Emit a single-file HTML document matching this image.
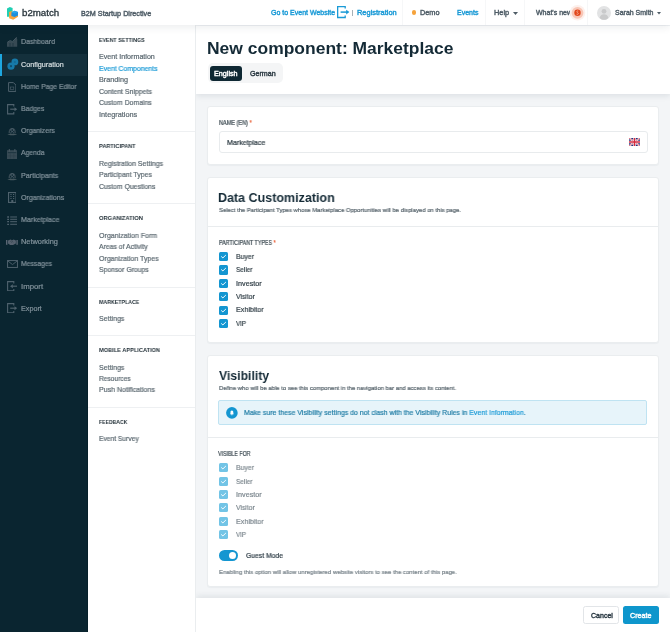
<!DOCTYPE html>
<html><head><meta charset="utf-8"><style>
html,body{margin:0;padding:0;width:670px;height:632px;overflow:hidden;background:#f3f5f7;font-family:"Liberation Sans", sans-serif}
.t{position:absolute;white-space:nowrap;will-change:transform}
.n{-webkit-text-stroke:0.2px currentColor}
.sb{-webkit-text-stroke:0.4px currentColor}
.r{position:absolute}
</style></head><body>
<div class="r" style="left:196px;top:26px;width:474px;height:606px;background:#f3f5f7"></div>
<div class="r" style="left:196px;top:26px;width:474px;height:68px;background:#fff;box-shadow:0 2px 6px rgba(20,40,60,0.10)"></div>
<div class="r" style="left:0px;top:0px;width:670px;height:25px;background:#fff;box-shadow:0 2px 9px rgba(20,40,60,0.09);z-index:8"></div>
<div class="r" style="left:0px;top:25px;width:88px;height:607px;background:#0a2530;z-index:5"></div>
<div class="r" style="left:87px;top:25px;width:1px;height:607px;background:#06202a;z-index:6"></div>
<div class="r" style="left:88px;top:25px;width:107px;height:607px;background:#fff;border-right:1px solid #eaedef;z-index:5"></div>
<svg class="r" style="left:0px;top:0px;z-index:9" width="22" height="22" viewBox="0 0 22 22"><polygon points="7,8.4 9.8,6.9 12.6,7.9 12.6,16.8 7,16.8" fill="#1fcfb3"/><polygon points="9.1,12 11.9,11 11.9,15.2 18,13.6 18,16.8 13.2,19.7 9.1,18.2" fill="#f9a43b"/><polygon points="11.4,12.4 14.6,10.8 18,12.1 18,15.4 14.6,17.1 11.4,15.9" fill="#1d8fdc"/><polygon points="11.4,12.4 14.6,10.8 18,12.1 14.6,13.6" fill="#2aa6ea"/></svg>
<div class="t n" style="left:21.71px;top:9px;font-size:8.4px;line-height:8.4px;color:#2a363d;font-weight:400;letter-spacing:0px;transform:scaleX(1.1585);transform-origin:0 0;z-index:9;-webkit-text-stroke:0.3px #2a363d">b2match</div>
<div class="t sb" style="left:81.46px;top:10px;font-size:7.0px;line-height:7.0px;color:#4e5c66;font-weight:401;letter-spacing:0px;transform:scaleX(1.0312);transform-origin:0 0;z-index:9">B2M Startup Directive</div>
<div class="t sb" style="left:270.56px;top:9px;font-size:7.0px;line-height:7.0px;color:#1a9ad6;font-weight:401;letter-spacing:0px;transform:scaleX(0.9981);transform-origin:0 0;z-index:9">Go to Event Website</div>
<svg class="r" style="left:337.3px;top:6.2px;z-index:9" width="14" height="13" viewBox="0 0 14 13"><path d="M8.2,2.6 V0.65 H0.65 V11.5 H8.2 V9.4" fill="none" stroke="#1a9ad6" stroke-width="1.3"/><path d="M3.6,6.1 H10" stroke="#1a9ad6" stroke-width="1.5"/><path d="M9.2,3.7 L12.4,6.1 L9.2,8.5 Z" fill="#1a9ad6"/></svg>
<div class="r" style="left:352.2px;top:10.2px;width:1.3px;height:5.6px;background:#a7b0b6;z-index:9"></div>
<div class="t sb" style="left:356.55px;top:9px;font-size:7.0px;line-height:7.0px;color:#1a9ad6;font-weight:401;letter-spacing:0px;transform:scaleX(1.0632);transform-origin:0 0;z-index:9">Registration</div>
<div class="r" style="left:402px;top:0px;width:1px;height:25px;background:#f6f7f8;z-index:9"></div>
<div class="r" style="left:485px;top:0px;width:1px;height:25px;background:#f6f7f8;z-index:9"></div>
<div class="r" style="left:524px;top:0px;width:1px;height:25px;background:#f6f7f8;z-index:9"></div>
<div class="r" style="left:587px;top:0px;width:1px;height:25px;background:#f6f7f8;z-index:9"></div>
<div class="r" style="left:411.8px;top:10.2px;width:4.6px;height:4.6px;background:#f6a33b;border-radius:50%;z-index:9"></div>
<div class="t sb" style="left:420.25px;top:9px;font-size:7.0px;line-height:7.0px;color:#4e5c66;font-weight:401;letter-spacing:0px;transform:scaleX(1.0461);transform-origin:0 0;z-index:9">Demo</div>
<div class="t sb" style="left:457.36px;top:9px;font-size:7.0px;line-height:7.0px;color:#1a9ad6;font-weight:401;letter-spacing:0px;transform:scaleX(0.9961);transform-origin:0 0;z-index:9">Events</div>
<div class="t sb" style="left:494.35px;top:9px;font-size:7.0px;line-height:7.0px;color:#4e5c66;font-weight:401;letter-spacing:0px;transform:scaleX(1.0530);transform-origin:0 0;z-index:9">Help</div>
<svg class="r" style="left:513px;top:11.5px;z-index:9" width="5" height="3" viewBox="0 0 5 3"><path d="M0,0 H5 L2.5,3 Z" fill="#4e5c66"/></svg>
<div class="t sb" style="left:535.76px;top:9px;font-size:7.0px;line-height:7.0px;color:#4e5c66;font-weight:401;letter-spacing:0px;transform:scaleX(1.0006);transform-origin:0 0;z-index:9">What's new</div>
<svg class="r" style="left:569px;top:4px;z-index:9" width="17" height="17" viewBox="0 0 17 17"><circle cx="8.5" cy="8.8" r="7.8" fill="#fdf0ec"/><circle cx="8.5" cy="8.8" r="5.9" fill="#f8c6b6"/><circle cx="8.5" cy="8.8" r="3.2" fill="#e2461b"/><path d="M9.3,7.1 C8.9,6.8 7.6,6.9 7.8,7.9 C7.9,8.6 9.3,8.6 9.3,9.6 C9.3,10.5 8,10.6 7.6,10.2" fill="none" stroke="#f7c0ae" stroke-width="0.7"/></svg>
<svg class="r" style="left:597px;top:5.5px;z-index:9" width="14" height="14" viewBox="0 0 14 14">
<circle cx="7" cy="7" r="7" fill="#e2e3e4"/>
<circle cx="7" cy="5.3" r="2.4" fill="#c9cacb"/>
<path d="M2.6,12 C3.2,9 4.8,8.2 7,8.2 C9.2,8.2 10.8,9 11.4,12 C10,13.3 8.6,13.8 7,13.8 C5.4,13.8 4,13.3 2.6,12Z" fill="#c9cacb"/>
</svg>
<div class="t sb" style="left:615.06px;top:9px;font-size:7.0px;line-height:7.0px;color:#4e5c66;font-weight:401;letter-spacing:0px;transform:scaleX(0.9974);transform-origin:0 0;z-index:9">Sarah Smith</div>
<svg class="r" style="left:657px;top:11.5px;z-index:9" width="4" height="3" viewBox="0 0 4 3"><path d="M0,0 H4 L2,2.6 Z" fill="#4e5c66"/></svg>
<div class="r" style="left:0px;top:53.5px;width:88px;height:22.5px;background:#14303c;z-index:5"></div>
<div class="r" style="left:0px;top:53.5px;width:1.7px;height:22.5px;background:#1ea7e0;z-index:6"></div>
<div class="t n" style="left:20.66px;top:38px;font-size:7.2px;line-height:7.2px;color:#83939c;font-weight:400;letter-spacing:0px;transform:scaleX(0.9669);transform-origin:0 0;z-index:9">Dashboard</div>
<div class="t n" style="left:20.66px;top:61px;font-size:7.2px;line-height:7.2px;color:#d8dfe2;font-weight:400;letter-spacing:0px;transform:scaleX(0.9989);transform-origin:0 0;z-index:9">Configuration</div>
<div class="t n" style="left:20.66px;top:83px;font-size:7.2px;line-height:7.2px;color:#83939c;font-weight:400;letter-spacing:0px;transform:scaleX(0.9488);transform-origin:0 0;z-index:9">Home Page Editor</div>
<div class="t n" style="left:20.66px;top:105px;font-size:7.2px;line-height:7.2px;color:#83939c;font-weight:400;letter-spacing:0px;transform:scaleX(0.9612);transform-origin:0 0;z-index:9">Badges</div>
<div class="t n" style="left:20.66px;top:127px;font-size:7.2px;line-height:7.2px;color:#83939c;font-weight:400;letter-spacing:0px;transform:scaleX(0.9624);transform-origin:0 0;z-index:9">Organizers</div>
<div class="t n" style="left:20.66px;top:149px;font-size:7.2px;line-height:7.2px;color:#83939c;font-weight:400;letter-spacing:0px;transform:scaleX(0.9488);transform-origin:0 0;z-index:9">Agenda</div>
<div class="t n" style="left:20.66px;top:172px;font-size:7.2px;line-height:7.2px;color:#83939c;font-weight:400;letter-spacing:0px;transform:scaleX(0.9886);transform-origin:0 0;z-index:9">Participants</div>
<div class="t n" style="left:20.66px;top:194px;font-size:7.2px;line-height:7.2px;color:#83939c;font-weight:400;letter-spacing:0px;transform:scaleX(0.9745);transform-origin:0 0;z-index:9">Organizations</div>
<div class="t n" style="left:20.66px;top:216px;font-size:7.2px;line-height:7.2px;color:#83939c;font-weight:400;letter-spacing:0px;transform:scaleX(0.9816);transform-origin:0 0;z-index:9">Marketplace</div>
<div class="t n" style="left:20.65px;top:238px;font-size:7.2px;line-height:7.2px;color:#83939c;font-weight:400;letter-spacing:0px;transform:scaleX(1.0259);transform-origin:0 0;z-index:9">Networking</div>
<div class="t n" style="left:20.66px;top:260px;font-size:7.2px;line-height:7.2px;color:#83939c;font-weight:400;letter-spacing:0px;transform:scaleX(0.9447);transform-origin:0 0;z-index:9">Messages</div>
<div class="t n" style="left:20.64px;top:283px;font-size:7.2px;line-height:7.2px;color:#83939c;font-weight:400;letter-spacing:0px;transform:scaleX(1.0825);transform-origin:0 0;z-index:9">Import</div>
<div class="t n" style="left:20.66px;top:305px;font-size:7.2px;line-height:7.2px;color:#83939c;font-weight:400;letter-spacing:0px;transform:scaleX(0.9970);transform-origin:0 0;z-index:9">Export</div>
<svg class="r" style="left:7px;top:37.3px;z-index:6" width="10.5" height="10.5" viewBox="0 0 10.5 10.5"><path d="M0,5.5 L3,4 L5.5,5 L9.5,0.5 L10.2,2 V9.8 H0 Z" fill="#374a54"/><path d="M0.3,5.3 L3,3.6 L5.5,4.6 L9.6,0.3" fill="none" stroke="#4a5c66" stroke-width="0.9"/><path d="M3,6 V9.5 M6,6 V9.5" stroke="#0a2530" stroke-width="0.5"/></svg>
<svg class="r" style="left:6.5px;top:58.2px;z-index:6" width="12" height="12.5" viewBox="0 0 12 12.5"><circle cx="4" cy="8.2" r="3.6" fill="#1779a8"/><circle cx="7.9" cy="3.9" r="3.4" fill="#1779a8"/><circle cx="4" cy="8.2" r="1.1" fill="#0f4c6c"/><circle cx="7.9" cy="3.9" r="1" fill="#136a95"/></svg>
<svg class="r" style="left:7.8px;top:82.3px;z-index:6" width="8.5" height="10" viewBox="0 0 8.5 10"><path d="M0.6,0.6 H5.4 L7.9,3.1 V9.4 H0.6 Z" fill="none" stroke="#4f626d" stroke-width="1"/><rect x="2.5" y="5" width="3.3" height="2.5" fill="none" stroke="#4f626d" stroke-width="0.6"/></svg>
<svg class="r" style="left:7px;top:104px;z-index:6" width="10.5" height="10.5" viewBox="0 0 10.5 10.5"><path d="M6.8,2.4 V0.6 H0.6 V9.9 H6.8 V8.1" fill="none" stroke="#4f626d" stroke-width="1.1"/><path d="M3.2,5.2 H8.3" stroke="#4f626d" stroke-width="1.2"/><path d="M7.5,3.2 L10.2,5.2 L7.5,7.2 Z" fill="#4f626d"/></svg>
<svg class="r" style="left:7px;top:127.2px;z-index:6" width="10.5" height="8.5" viewBox="0 0 10.5 8.5"><path d="M2.2,6.2 C2.2,3 3.3,1.6 5.2,1.6 C7.1,1.6 8.2,3 8.2,6.2" fill="none" stroke="#374a54" stroke-width="1.4"/><circle cx="5.2" cy="3" r="1.4" fill="none" stroke="#4f626d" stroke-width="0.8"/><path d="M3.6,6.5 C3.8,5.3 4.4,4.7 5.2,4.7 C6,4.7 6.6,5.3 6.8,6.5" fill="none" stroke="#4f626d" stroke-width="0.8"/><path d="M0.3,7.6 C2,6.5 8.4,6.5 10.2,7.6 C8.4,8.6 2,8.6 0.3,7.6 Z" fill="#46585f"/></svg>
<svg class="r" style="left:7px;top:148.7px;z-index:6" width="10.2" height="10.2" viewBox="0 0 10.2 10.2"><rect x="0" y="1.2" width="10.2" height="9" fill="#374a54"/><path d="M2.3,0 V2.6 M7.9,0 V2.6" stroke="#4a5c66" stroke-width="1"/><path d="M0.8,3.6 H9.4" stroke="#0d2833" stroke-width="0.6"/><path d="M3.4,4.2 V9.6 M6.8,4.2 V9.6 M0.8,6.9 H9.4" stroke="#2c3e48" stroke-width="0.5"/></svg>
<svg class="r" style="left:7px;top:172px;z-index:6" width="10.5" height="8.5" viewBox="0 0 10.5 8.5"><path d="M2.2,6.2 C2.2,3 3.3,1.6 5.2,1.6 C7.1,1.6 8.2,3 8.2,6.2" fill="none" stroke="#374a54" stroke-width="1.4"/><circle cx="5.2" cy="3" r="1.4" fill="none" stroke="#4f626d" stroke-width="0.8"/><path d="M3.6,6.5 C3.8,5.3 4.4,4.7 5.2,4.7 C6,4.7 6.6,5.3 6.8,6.5" fill="none" stroke="#4f626d" stroke-width="0.8"/><path d="M0.3,7.6 C2,6.5 8.4,6.5 10.2,7.6 C8.4,8.6 2,8.6 0.3,7.6 Z" fill="#46585f"/></svg>
<svg class="r" style="left:7.6px;top:192.4px;z-index:6" width="8.6" height="11" viewBox="0 0 8.6 11"><rect x="0.55" y="0.55" width="7.5" height="9.9" fill="none" stroke="#4f626d" stroke-width="1.1"/><path d="M2.4,2.5 H3.6 M5,2.5 H6.2 M2.4,4.5 H3.6 M5,4.5 H6.2 M2.4,6.5 H3.6 M5,6.5 H6.2" stroke="#4f626d" stroke-width="1"/><rect x="3.3" y="8" width="2" height="2.5" fill="#4f626d"/></svg>
<svg class="r" style="left:6.8px;top:216px;z-index:6" width="10.4" height="9.4" viewBox="0 0 10.4 9.4"><path d="M0.2,1 H2 M0.2,3.3 H2 M0.2,5.7 H2 M0.2,8.3 H2" stroke="#4f626d" stroke-width="1.3"/><path d="M3.2,1 H10.2 M3.2,3.3 H10.2 M3.2,5.7 H10.2 M3.2,8.3 H10.2" stroke="#4f626d" stroke-width="1"/></svg>
<svg class="r" style="left:6.2px;top:238.8px;z-index:6" width="12" height="6.6" viewBox="0 0 12 6.6"><rect x="0" y="1" width="1.4" height="4.8" fill="#5a6673"/><rect x="10.4" y="1" width="1.4" height="4.8" fill="#5a6673"/><path d="M2,1.6 L4.5,0.4 L6.2,1.2 L7.6,0.4 L9.9,1.4 V4.6 L6.4,6.3 L4.2,5.9 L2,4.6 Z" fill="#55616e"/><path d="M4.3,2.2 L5.9,3.6 M5.4,1.6 L7.3,3.4" stroke="#33424d" stroke-width="0.7"/></svg>
<svg class="r" style="left:6.6px;top:259.5px;z-index:6" width="11" height="8" viewBox="0 0 11 8"><rect x="0.55" y="0.55" width="9.9" height="6.9" fill="none" stroke="#4f626d" stroke-width="1"/><path d="M0.7,0.8 L5.5,4.6 L10.3,0.8" fill="none" stroke="#4f626d" stroke-width="0.9"/></svg>
<svg class="r" style="left:6.8px;top:280.6px;z-index:6" width="10.5" height="10.5" viewBox="0 0 10.5 10.5"><path d="M6.8,2.4 V0.6 H0.6 V9.9 H6.8 V8.1" fill="none" stroke="#4f626d" stroke-width="1.1"/><path d="M5.2,5.2 H10.2" stroke="#4f626d" stroke-width="1.2"/><path d="M5.8,3.2 L3,5.2 L5.8,7.2 Z" fill="#4f626d"/></svg>
<svg class="r" style="left:6.8px;top:302.6px;z-index:6" width="10.5" height="10.5" viewBox="0 0 10.5 10.5"><path d="M6.8,2.4 V0.6 H0.6 V9.9 H6.8 V8.1" fill="none" stroke="#4f626d" stroke-width="1.1"/><path d="M3.2,5.2 H8.3" stroke="#4f626d" stroke-width="1.2"/><path d="M7.5,3.2 L10.2,5.2 L7.5,7.2 Z" fill="#4f626d"/></svg>
<div class="t" style="left:99.09px;top:38px;font-size:5.9px;line-height:5.9px;color:#1d2b33;font-weight:700;letter-spacing:0px;transform:scaleX(0.9012);transform-origin:0 0;z-index:9">EVENT SETTINGS</div>
<div class="t n" style="left:99.06px;top:54px;font-size:7.1px;line-height:7.1px;color:#5b6870;font-weight:400;letter-spacing:0px;transform:scaleX(1.0042);transform-origin:0 0;z-index:9">Event Information</div>
<div class="t n" style="left:99.06px;top:66px;font-size:7.1px;line-height:7.1px;color:#1a9ad6;font-weight:400;letter-spacing:0px;transform:scaleX(0.9715);transform-origin:0 0;z-index:9">Event Components</div>
<div class="t n" style="left:99.05px;top:77px;font-size:7.1px;line-height:7.1px;color:#5b6870;font-weight:400;letter-spacing:0px;transform:scaleX(1.0217);transform-origin:0 0;z-index:9">Branding</div>
<div class="t n" style="left:99.06px;top:89px;font-size:7.1px;line-height:7.1px;color:#5b6870;font-weight:400;letter-spacing:0px;transform:scaleX(0.9692);transform-origin:0 0;z-index:9">Content Snippets</div>
<div class="t n" style="left:99.06px;top:100px;font-size:7.1px;line-height:7.1px;color:#5b6870;font-weight:400;letter-spacing:0px;transform:scaleX(0.9692);transform-origin:0 0;z-index:9">Custom Domains</div>
<div class="t n" style="left:99.05px;top:112px;font-size:7.1px;line-height:7.1px;color:#5b6870;font-weight:400;letter-spacing:0px;transform:scaleX(1.0314);transform-origin:0 0;z-index:9">Integrations</div>
<div class="r" style="left:88px;top:131px;width:107px;height:1px;background:#eef0f2;z-index:6"></div>
<div class="t" style="left:99.09px;top:144px;font-size:5.9px;line-height:5.9px;color:#1d2b33;font-weight:700;letter-spacing:0px;transform:scaleX(0.9492);transform-origin:0 0;z-index:9">PARTICIPANT</div>
<div class="t n" style="left:99.06px;top:161px;font-size:7.1px;line-height:7.1px;color:#5b6870;font-weight:400;letter-spacing:0px;transform:scaleX(0.9766);transform-origin:0 0;z-index:9">Registration Settings</div>
<div class="t n" style="left:99.06px;top:172px;font-size:7.1px;line-height:7.1px;color:#5b6870;font-weight:400;letter-spacing:0px;transform:scaleX(0.9751);transform-origin:0 0;z-index:9">Participant Types</div>
<div class="t n" style="left:99.06px;top:184px;font-size:7.1px;line-height:7.1px;color:#5b6870;font-weight:400;letter-spacing:0px;transform:scaleX(0.9672);transform-origin:0 0;z-index:9">Custom Questions</div>
<div class="r" style="left:88px;top:203px;width:107px;height:1px;background:#eef0f2;z-index:6"></div>
<div class="t" style="left:99.08px;top:216px;font-size:5.9px;line-height:5.9px;color:#1d2b33;font-weight:700;letter-spacing:0px;transform:scaleX(0.9756);transform-origin:0 0;z-index:9">ORGANIZATION</div>
<div class="t n" style="left:99.06px;top:233px;font-size:7.1px;line-height:7.1px;color:#5b6870;font-weight:400;letter-spacing:0px;transform:scaleX(0.9900);transform-origin:0 0;z-index:9">Organization Form</div>
<div class="t n" style="left:99.06px;top:244px;font-size:7.1px;line-height:7.1px;color:#5b6870;font-weight:400;letter-spacing:0px;transform:scaleX(0.9634);transform-origin:0 0;z-index:9">Areas of Activity</div>
<div class="t n" style="left:99.06px;top:256px;font-size:7.1px;line-height:7.1px;color:#5b6870;font-weight:400;letter-spacing:0px;transform:scaleX(0.9770);transform-origin:0 0;z-index:9">Organization Types</div>
<div class="t n" style="left:99.06px;top:267px;font-size:7.1px;line-height:7.1px;color:#5b6870;font-weight:400;letter-spacing:0px;transform:scaleX(0.9624);transform-origin:0 0;z-index:9">Sponsor Groups</div>
<div class="r" style="left:88px;top:286.5px;width:107px;height:1px;background:#eef0f2;z-index:6"></div>
<div class="t" style="left:99.09px;top:300px;font-size:5.9px;line-height:5.9px;color:#1d2b33;font-weight:700;letter-spacing:0px;transform:scaleX(0.8923);transform-origin:0 0;z-index:9">MARKETPLACE</div>
<div class="t n" style="left:99.06px;top:316px;font-size:7.1px;line-height:7.1px;color:#5b6870;font-weight:400;letter-spacing:0px;transform:scaleX(0.9867);transform-origin:0 0;z-index:9">Settings</div>
<div class="r" style="left:88px;top:335px;width:107px;height:1px;background:#eef0f2;z-index:6"></div>
<div class="t" style="left:99.09px;top:348px;font-size:5.9px;line-height:5.9px;color:#1d2b33;font-weight:700;letter-spacing:0px;transform:scaleX(0.9568);transform-origin:0 0;z-index:9">MOBILE APPLICATION</div>
<div class="t n" style="left:99.06px;top:365px;font-size:7.1px;line-height:7.1px;color:#5b6870;font-weight:400;letter-spacing:0px;transform:scaleX(0.9867);transform-origin:0 0;z-index:9">Settings</div>
<div class="t n" style="left:99.07px;top:376px;font-size:7.1px;line-height:7.1px;color:#5b6870;font-weight:400;letter-spacing:0px;transform:scaleX(0.9339);transform-origin:0 0;z-index:9">Resources</div>
<div class="t n" style="left:99.06px;top:387px;font-size:7.1px;line-height:7.1px;color:#5b6870;font-weight:400;letter-spacing:0px;transform:scaleX(0.9848);transform-origin:0 0;z-index:9">Push Notifications</div>
<div class="r" style="left:88px;top:407px;width:107px;height:1px;background:#eef0f2;z-index:6"></div>
<div class="t" style="left:99.10px;top:420px;font-size:5.9px;line-height:5.9px;color:#1d2b33;font-weight:700;letter-spacing:0px;transform:scaleX(0.8629);transform-origin:0 0;z-index:9">FEEDBACK</div>
<div class="t n" style="left:99.07px;top:436px;font-size:7.1px;line-height:7.1px;color:#5b6870;font-weight:400;letter-spacing:0px;transform:scaleX(0.9398);transform-origin:0 0;z-index:9">Event Survey</div>
<div class="t" style="left:206.95px;top:40px;font-size:17.4px;line-height:17.4px;color:#142a36;font-weight:700;letter-spacing:0px;transform:scaleX(1.0043);transform-origin:0 0;z-index:2">New component: Marketplace</div>
<div class="r" style="left:207.5px;top:62.8px;width:75.3px;height:20.2px;background:#f4f5f6;border-radius:5px;z-index:2"></div>
<div class="r" style="left:209.9px;top:65.5px;width:32.1px;height:15px;background:#0f2833;border-radius:3px;z-index:2"></div>
<div class="t sb" style="left:214.46px;top:70px;font-size:7.0px;line-height:7.0px;color:#ffffff;font-weight:401;letter-spacing:0px;transform:scaleX(1.0282);transform-origin:0 0;z-index:3">English</div>
<div class="t sb" style="left:249.96px;top:70px;font-size:7.0px;line-height:7.0px;color:#2d3b44;font-weight:401;letter-spacing:0px;transform:scaleX(1.0122);transform-origin:0 0;z-index:3">German</div>
<div class="r" style="left:207px;top:106px;width:451.5px;height:58.7px;background:#fff;border:1px solid #eaedef;border-radius:3px;box-sizing:border-box;box-shadow:0 1px 1px rgba(30,50,70,0.04);z-index:1"></div>
<div class="t n" style="left:218.79px;top:120px;font-size:6.3px;line-height:6.3px;color:#39474f;font-weight:400;letter-spacing:0px;transform:scaleX(0.8788);transform-origin:0 0;z-index:2">NAME (EN) <span style="color:#e8643c">*</span></div>
<div class="r" style="left:218.5px;top:130.9px;width:429px;height:22.4px;background:#fff;border:1px solid #e8ebed;border-radius:3px;box-sizing:border-box;z-index:2"></div>
<div class="t n" style="left:226.56px;top:139px;font-size:7.2px;line-height:7.2px;color:#2a3840;font-weight:400;letter-spacing:0px;transform:scaleX(0.9790);transform-origin:0 0;z-index:3">Marketplace</div>
<svg class="r" style="left:628.5px;top:137.6px;z-index:3" width="11" height="8" viewBox="0 0 11 8"><rect width="11" height="8" fill="#24307a"/><path d="M0,0 L11,8 M11,0 L0,8" stroke="#fff" stroke-width="1.8"/><path d="M0,0 L11,8 M11,0 L0,8" stroke="#d32b3f" stroke-width="0.7"/><path d="M5.5,0 V8 M0,4 H11" stroke="#fff" stroke-width="2.6"/><path d="M5.5,0 V8 M0,4 H11" stroke="#d32b3f" stroke-width="1.5"/></svg>
<div class="r" style="left:207px;top:176.7px;width:451.5px;height:166px;background:#fff;border:1px solid #eaedef;border-radius:3px;box-sizing:border-box;box-shadow:0 1px 1px rgba(30,50,70,0.04);z-index:1"></div>
<div class="t" style="left:218.45px;top:192px;font-size:12.8px;line-height:12.8px;color:#142a36;font-weight:700;letter-spacing:0px;transform:scaleX(0.9770);transform-origin:0 0;z-index:2">Data Customization</div>
<div class="t n" style="left:218.88px;top:207px;font-size:6.2px;line-height:6.2px;color:#56636b;font-weight:400;letter-spacing:0px;transform:scaleX(0.9523);transform-origin:0 0;z-index:2">Select the Participant Types whose Marketplace Opportunities will be displayed on this page.</div>
<div class="r" style="left:208px;top:226px;width:449.5px;height:1px;background:#e9ecee;z-index:2"></div>
<div class="t n" style="left:218.59px;top:240px;font-size:6.3px;line-height:6.3px;color:#39474f;font-weight:400;letter-spacing:0px;transform:scaleX(0.8450);transform-origin:0 0;z-index:2">PARTICIPANT TYPES <span style="color:#e8643c">*</span></div>
<div class="r" style="left:218.7px;top:252.1px;width:9.1px;height:9.1px;background:#1496d1;border-radius:1.5px;z-index:2"></div>
<svg class="r" style="left:218.7px;top:252.1px;z-index:3" width="9.1" height="9.1" viewBox="0 0 9.1 9.1"><path d="M2.5,4.7 L3.9,5.9 L6.6,3.3" fill="none" stroke="#fff" stroke-width="0.95" stroke-linecap="round" stroke-linejoin="round"/></svg>
<div class="t n" style="left:235.56px;top:253px;font-size:7.2px;line-height:7.2px;color:#2f3d45;font-weight:400;letter-spacing:0px;transform:scaleX(0.9535);transform-origin:0 0;z-index:2">Buyer</div>
<div class="r" style="left:218.7px;top:265.48px;width:9.1px;height:9.1px;background:#1496d1;border-radius:1.5px;z-index:2"></div>
<svg class="r" style="left:218.7px;top:265.48px;z-index:3" width="9.1" height="9.1" viewBox="0 0 9.1 9.1"><path d="M2.5,4.7 L3.9,5.9 L6.6,3.3" fill="none" stroke="#fff" stroke-width="0.95" stroke-linecap="round" stroke-linejoin="round"/></svg>
<div class="t n" style="left:235.57px;top:266px;font-size:7.2px;line-height:7.2px;color:#2f3d45;font-weight:400;letter-spacing:0px;transform:scaleX(0.8944);transform-origin:0 0;z-index:2">Seller</div>
<div class="r" style="left:218.7px;top:278.86px;width:9.1px;height:9.1px;background:#1496d1;border-radius:1.5px;z-index:2"></div>
<svg class="r" style="left:218.7px;top:278.86px;z-index:3" width="9.1" height="9.1" viewBox="0 0 9.1 9.1"><path d="M2.5,4.7 L3.9,5.9 L6.6,3.3" fill="none" stroke="#fff" stroke-width="0.95" stroke-linecap="round" stroke-linejoin="round"/></svg>
<div class="t n" style="left:235.56px;top:280px;font-size:7.2px;line-height:7.2px;color:#2f3d45;font-weight:400;letter-spacing:0px;transform:scaleX(1.0053);transform-origin:0 0;z-index:2">Investor</div>
<div class="r" style="left:218.7px;top:292.24px;width:9.1px;height:9.1px;background:#1496d1;border-radius:1.5px;z-index:2"></div>
<svg class="r" style="left:218.7px;top:292.24px;z-index:3" width="9.1" height="9.1" viewBox="0 0 9.1 9.1"><path d="M2.5,4.7 L3.9,5.9 L6.6,3.3" fill="none" stroke="#fff" stroke-width="0.95" stroke-linecap="round" stroke-linejoin="round"/></svg>
<div class="t n" style="left:235.56px;top:293px;font-size:7.2px;line-height:7.2px;color:#2f3d45;font-weight:400;letter-spacing:0px;transform:scaleX(0.9428);transform-origin:0 0;z-index:2">Visitor</div>
<div class="r" style="left:218.7px;top:305.62px;width:9.1px;height:9.1px;background:#1496d1;border-radius:1.5px;z-index:2"></div>
<svg class="r" style="left:218.7px;top:305.62px;z-index:3" width="9.1" height="9.1" viewBox="0 0 9.1 9.1"><path d="M2.5,4.7 L3.9,5.9 L6.6,3.3" fill="none" stroke="#fff" stroke-width="0.95" stroke-linecap="round" stroke-linejoin="round"/></svg>
<div class="t n" style="left:235.56px;top:306px;font-size:7.2px;line-height:7.2px;color:#2f3d45;font-weight:400;letter-spacing:0px;transform:scaleX(0.9868);transform-origin:0 0;z-index:2">Exhibitor</div>
<div class="r" style="left:218.7px;top:319.0px;width:9.1px;height:9.1px;background:#1496d1;border-radius:1.5px;z-index:2"></div>
<svg class="r" style="left:218.7px;top:319.0px;z-index:3" width="9.1" height="9.1" viewBox="0 0 9.1 9.1"><path d="M2.5,4.7 L3.9,5.9 L6.6,3.3" fill="none" stroke="#fff" stroke-width="0.95" stroke-linecap="round" stroke-linejoin="round"/></svg>
<div class="t n" style="left:235.58px;top:320px;font-size:7.2px;line-height:7.2px;color:#2f3d45;font-weight:400;letter-spacing:0px;transform:scaleX(0.8636);transform-origin:0 0;z-index:2">VIP</div>
<div class="r" style="left:207px;top:354.7px;width:451.5px;height:232.3px;background:#fff;border:1px solid #eaedef;border-radius:3px;box-sizing:border-box;box-shadow:0 1px 1px rgba(30,50,70,0.04);z-index:1"></div>
<div class="t" style="left:218.80px;top:369px;font-size:13.0px;line-height:13.0px;color:#142a36;font-weight:700;letter-spacing:0px;transform:scaleX(0.9408);transform-origin:0 0;z-index:2">Visibility</div>
<div class="t n" style="left:218.88px;top:385px;font-size:6.2px;line-height:6.2px;color:#56636b;font-weight:400;letter-spacing:0px;transform:scaleX(0.9570);transform-origin:0 0;z-index:2">Define who will be able to see this component in the navigation bar and access its content.</div>
<div class="r" style="left:218.3px;top:400.2px;width:429.2px;height:25.3px;background:#e7f4fa;border:1px solid #bfe3f2;border-radius:2px;box-sizing:border-box;z-index:2"></div>
<svg class="r" style="left:225.9px;top:407.1px;z-index:3" width="11.8" height="11.8" viewBox="0 0 11.8 11.8"><circle cx="5.9" cy="5.9" r="5.8" fill="#1496d1"/><path d="M5.9,3.6 C4.9,3.6 4.5,4.4 4.5,5.2 V6.3 L4,7.2 H7.8 L7.3,6.3 V5.2 C7.3,4.4 6.9,3.6 5.9,3.6 Z" fill="#fff"/><circle cx="5.9" cy="7.7" r="0.6" fill="#fff"/></svg>
<div class="t n" style="left:243.66px;top:409px;font-size:7.2px;line-height:7.2px;color:#227ea6;font-weight:400;letter-spacing:0px;transform:scaleX(0.9666);transform-origin:0 0;z-index:3">Make sure these Visibility settings do not clash with the Visibility Rules in <span style="color:#1a9ad6">Event Information</span>.</div>
<div class="r" style="left:208px;top:436.8px;width:449.5px;height:1px;background:#e9ecee;z-index:2"></div>
<div class="t n" style="left:218.39px;top:451px;font-size:6.3px;line-height:6.3px;color:#39474f;font-weight:400;letter-spacing:0px;transform:scaleX(0.8351);transform-origin:0 0;z-index:2">VISIBLE FOR</div>
<div class="r" style="left:218.8px;top:463.3px;width:9.1px;height:9.1px;background:#72c4e6;border-radius:1.5px;z-index:2"></div>
<svg class="r" style="left:218.8px;top:463.3px;z-index:3" width="9.1" height="9.1" viewBox="0 0 9.1 9.1"><path d="M2.5,4.7 L3.9,5.9 L6.6,3.3" fill="none" stroke="#fff" stroke-width="0.95" stroke-linecap="round" stroke-linejoin="round"/></svg>
<div class="t n" style="left:235.56px;top:464px;font-size:7.2px;line-height:7.2px;color:#7d888f;font-weight:400;letter-spacing:0px;transform:scaleX(0.9535);transform-origin:0 0;z-index:2">Buyer</div>
<div class="r" style="left:218.8px;top:476.66px;width:9.1px;height:9.1px;background:#72c4e6;border-radius:1.5px;z-index:2"></div>
<svg class="r" style="left:218.8px;top:476.66px;z-index:3" width="9.1" height="9.1" viewBox="0 0 9.1 9.1"><path d="M2.5,4.7 L3.9,5.9 L6.6,3.3" fill="none" stroke="#fff" stroke-width="0.95" stroke-linecap="round" stroke-linejoin="round"/></svg>
<div class="t n" style="left:235.57px;top:478px;font-size:7.2px;line-height:7.2px;color:#7d888f;font-weight:400;letter-spacing:0px;transform:scaleX(0.8944);transform-origin:0 0;z-index:2">Seller</div>
<div class="r" style="left:218.8px;top:490.02px;width:9.1px;height:9.1px;background:#72c4e6;border-radius:1.5px;z-index:2"></div>
<svg class="r" style="left:218.8px;top:490.02px;z-index:3" width="9.1" height="9.1" viewBox="0 0 9.1 9.1"><path d="M2.5,4.7 L3.9,5.9 L6.6,3.3" fill="none" stroke="#fff" stroke-width="0.95" stroke-linecap="round" stroke-linejoin="round"/></svg>
<div class="t n" style="left:235.56px;top:491px;font-size:7.2px;line-height:7.2px;color:#7d888f;font-weight:400;letter-spacing:0px;transform:scaleX(1.0053);transform-origin:0 0;z-index:2">Investor</div>
<div class="r" style="left:218.8px;top:503.38px;width:9.1px;height:9.1px;background:#72c4e6;border-radius:1.5px;z-index:2"></div>
<svg class="r" style="left:218.8px;top:503.38px;z-index:3" width="9.1" height="9.1" viewBox="0 0 9.1 9.1"><path d="M2.5,4.7 L3.9,5.9 L6.6,3.3" fill="none" stroke="#fff" stroke-width="0.95" stroke-linecap="round" stroke-linejoin="round"/></svg>
<div class="t n" style="left:235.56px;top:504px;font-size:7.2px;line-height:7.2px;color:#7d888f;font-weight:400;letter-spacing:0px;transform:scaleX(0.9428);transform-origin:0 0;z-index:2">Visitor</div>
<div class="r" style="left:218.8px;top:516.74px;width:9.1px;height:9.1px;background:#72c4e6;border-radius:1.5px;z-index:2"></div>
<svg class="r" style="left:218.8px;top:516.74px;z-index:3" width="9.1" height="9.1" viewBox="0 0 9.1 9.1"><path d="M2.5,4.7 L3.9,5.9 L6.6,3.3" fill="none" stroke="#fff" stroke-width="0.95" stroke-linecap="round" stroke-linejoin="round"/></svg>
<div class="t n" style="left:235.56px;top:518px;font-size:7.2px;line-height:7.2px;color:#7d888f;font-weight:400;letter-spacing:0px;transform:scaleX(0.9868);transform-origin:0 0;z-index:2">Exhibitor</div>
<div class="r" style="left:218.8px;top:530.1px;width:9.1px;height:9.1px;background:#72c4e6;border-radius:1.5px;z-index:2"></div>
<svg class="r" style="left:218.8px;top:530.1px;z-index:3" width="9.1" height="9.1" viewBox="0 0 9.1 9.1"><path d="M2.5,4.7 L3.9,5.9 L6.6,3.3" fill="none" stroke="#fff" stroke-width="0.95" stroke-linecap="round" stroke-linejoin="round"/></svg>
<div class="t n" style="left:235.58px;top:531px;font-size:7.2px;line-height:7.2px;color:#7d888f;font-weight:400;letter-spacing:0px;transform:scaleX(0.8636);transform-origin:0 0;z-index:2">VIP</div>
<div class="r" style="left:218.7px;top:550.1px;width:19.4px;height:11.1px;background:#1496d1;border-radius:6px;z-index:2"></div>
<div class="r" style="left:228.9px;top:552px;width:7.3px;height:7.3px;background:#fff;border-radius:50%;z-index:3"></div>
<div class="t n" style="left:245.86px;top:552px;font-size:7.2px;line-height:7.2px;color:#2b3a44;font-weight:400;letter-spacing:0px;transform:scaleX(0.9432);transform-origin:0 0;z-index:2">Guest Mode</div>
<div class="t n" style="left:218.58px;top:569px;font-size:6.2px;line-height:6.2px;color:#78838a;font-weight:400;letter-spacing:0px;transform:scaleX(0.9656);transform-origin:0 0;z-index:2">Enabling this option will allow unregistered website visitors to see the content of this page.</div>
<div class="r" style="left:196px;top:598px;width:474px;height:34px;background:#fff;box-shadow:0 -2px 6px rgba(20,40,60,0.09);z-index:4"></div>
<div class="r" style="left:583.3px;top:606.1px;width:36.1px;height:18.2px;background:#fff;border:1px solid #e2e5e8;border-radius:2.5px;box-sizing:border-box;z-index:5"></div>
<div class="t sb" style="left:590.76px;top:612px;font-size:7.0px;line-height:7.0px;color:#2b3a44;font-weight:401;letter-spacing:0px;transform:scaleX(1.0048);transform-origin:0 0;z-index:9">Cancel</div>
<div class="r" style="left:623.1px;top:606.1px;width:35.9px;height:18.4px;background:#0e96cc;border-radius:2.5px;z-index:5"></div>
<div class="t sb" style="left:630.26px;top:612px;font-size:7.0px;line-height:7.0px;color:#ffffff;font-weight:401;letter-spacing:0px;transform:scaleX(1.0225);transform-origin:0 0;z-index:9">Create</div>
</body></html>
